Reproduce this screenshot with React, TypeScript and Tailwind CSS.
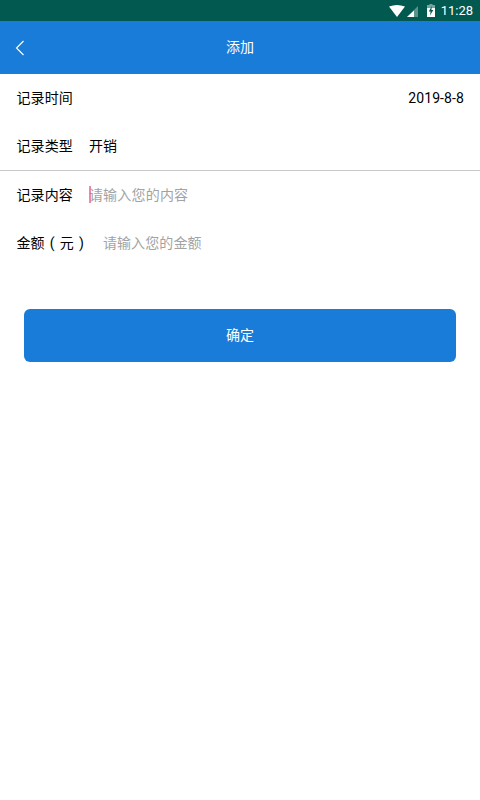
function Row({ children, className = "" }: { children: React.ReactNode; className?: string }) {
  return <div className={`flex items-center pl-[16.5px] pr-4 text-[14px] tracking-[0.1px] text-black ${className}`}>{children}</div>;
}

export default function App() {
  return (
    <div className="w-[480px] h-[800px] bg-white overflow-hidden flex flex-col font-['Roboto','Noto_Sans_CJK_SC',sans-serif]">
      <div className="h-[21px] bg-[#01594f] flex items-center justify-end pr-[7px] shrink-0">
        <svg width="16" height="12" viewBox="0 0 16 12">
          <path d="M0 1.5 Q8 -1.5 16 1.5 L8 12 Z" fill="#fff" />
        </svg>
        <svg width="12" height="12" viewBox="0 0 12 12" className="ml-[2px]">
          <path d="M11 1 V12 H0 Z" fill="#fff" fillOpacity="0.35" />
          <path d="M7 5.5 V12 H0 L7 5.5 Z" fill="#fff" />
        </svg>
        <svg width="8" height="13" viewBox="0 0 8 13" className="ml-[8px]">
          <path d="M2.5 0 H5.5 V1 H8 V13 H0 V1 H2.5 Z" fill="#fff" fillOpacity="0.45" />
          <path d="M0 4 H8 V13 H0 Z" fill="#fff" />
          <path d="M4.8 2 L1.8 7.5 H3.6 L3 11.5 L6.3 6 H4.4 Z" fill="#01594f" />
        </svg>
        <span className="ml-[6px] text-[13px] leading-none text-white">11:28</span>
      </div>

      <div className="relative h-[53px] bg-[#197cd8] flex items-center justify-center shrink-0">
        <svg width="10" height="16" viewBox="0 0 10 16" fill="none" stroke="#fff" strokeWidth="1.15" className="absolute left-[15px] top-[19px]">
          <path d="M8.5 1 L1.5 8 L8.5 15" />
        </svg>
        <span className="text-[14px] text-white">添加</span>
      </div>

      <Row className="h-12 justify-between">
        <span>记录时间</span>
        <span>2019-8-8</span>
      </Row>
      <Row className="h-[49px] gap-4 border-b border-[#c9c9c9]">
        <span>记录类型</span>
        <span>开销</span>
      </Row>
      <Row className="h-12 gap-4">
        <span>记录内容</span>
        <span className="relative text-[#a3a3a3] tracking-[0.2px]">
          请输入您的内容
          <span className="absolute left-0 top-[1px] w-[2px] h-[17px] bg-[#e0588c] opacity-70" />
        </span>
      </Row>
      <Row className="h-12 gap-[19px]">
        <span className="[word-spacing:1.5px]">金额 ( 元 )</span>
        <span className="text-[#a3a3a3]">请输入您的金额</span>
      </Row>

      <div className="px-6 mt-[42px]">
        <div className="h-[53px] rounded-md bg-[#197cd8] flex items-center justify-center text-[14px] text-white">确定</div>
      </div>
    </div>
  );
}
